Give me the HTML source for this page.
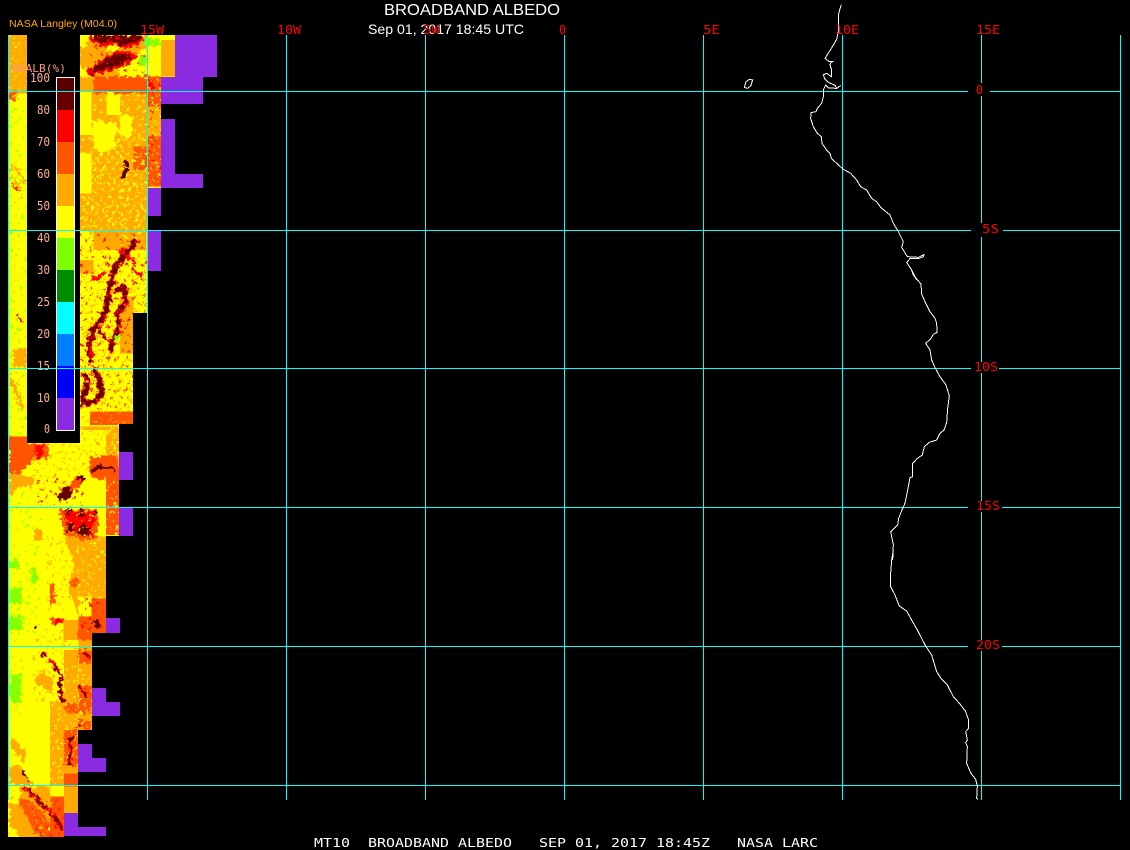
<!DOCTYPE html>
<html><head><meta charset="utf-8"><style>
html,body{margin:0;padding:0;background:#000;width:1130px;height:850px;overflow:hidden}
svg{display:block}
text{font-family:"DejaVu Sans Mono","Liberation Mono",monospace}
</style></head><body>
<svg width="1130" height="850" viewBox="0 0 1130 850" xmlns="http://www.w3.org/2000/svg">
<defs>
<clipPath id="cov"><polygon points="9,35 175,35 175,77 161,77 161,188 147,188 147,313 133,313 133,424 119,424 119,536 106,536 106,633 92,633 92,730 78,730 78,813 64,813 64,837 8,837 8,800 9,800"/></clipPath>
<filter id="rough" filterUnits="userSpaceOnUse" x="0" y="20" width="200" height="830" color-interpolation-filters="sRGB">
<feTurbulence type="fractalNoise" baseFrequency=".22" numOctaves="3" seed="7" result="n"/>
<feDisplacementMap in="SourceGraphic" in2="n" scale="9" xChannelSelector="R" yChannelSelector="G"/>
</filter>
<pattern id="sy" width="93" height="87" patternUnits="userSpaceOnUse"><path fill="#ff0" d="M4 5h6v6h-6zM22 14h5v5h-5zM40 3h6v5h-6zM61 11h5v6h-5zM80 6h6v6h-6zM12 28h6v6h-6zM33 25h5v5h-5zM52 32h6v6h-6zM72 27h5v5h-5zM88 38h5v6h-5zM7 47h5v5h-5zM26 44h6v6h-6zM43 52h5v5h-5zM64 48h6v6h-6zM81 55h6v6h-6zM15 66h6v5h-6zM35 63h5v6h-5zM55 70h6v5h-6zM74 68h5v5h-5zM3 78h6v6h-6zM46 80h5v5h-5zM85 76h6v6h-6z"/></pattern>
<pattern id="sy2" width="77" height="67" patternUnits="userSpaceOnUse" patternTransform="translate(11 17)"><path fill="#ff0" d="M2 2h9v6h-9zM30 6h6v9h-6zM52 3h9v6h-9zM15 22h6v6h-6zM42 26h9v6h-9zM66 20h6v9h-6zM6 42h9v6h-9zM28 46h6v6h-6zM58 44h6v9h-6zM18 58h9v5h-9zM44 60h6v6h-6z"/></pattern>
<pattern id="so" width="87" height="91" patternUnits="userSpaceOnUse"><path fill="#fa0" d="M9 3h6v6h-6zM30 9h5v5h-5zM50 2h6v6h-6zM70 12h6v5h-6zM3 22h5v6h-5zM20 27h6v6h-6zM41 24h6v5h-6zM60 31h5v5h-5zM78 28h6v6h-6zM12 44h5v5h-5zM33 42h6v6h-6zM53 50h6v5h-6zM72 46h5v6h-5zM5 62h6v6h-6zM25 66h5v5h-5zM45 63h6v6h-6zM65 70h6v6h-6zM82 64h5v5h-5zM14 80h6v6h-6zM36 84h5v5h-5zM57 82h5v5h-5z"/></pattern>
<pattern id="sl" width="71" height="79" patternUnits="userSpaceOnUse"><path fill="#8f0" d="M5 6h6v6h-6zM30 3h5v5h-5zM55 11h6v6h-6zM17 25h6v5h-6zM42 30h5v6h-5zM64 34h5v5h-5zM8 48h5v6h-5zM31 53h6v6h-6zM54 58h6v5h-6zM20 70h5v5h-5zM45 72h6v6h-6z"/></pattern>
<pattern id="sr" width="79" height="73" patternUnits="userSpaceOnUse"><path fill="#f00" d="M6 4h6v6h-6zM33 9h6v5h-6zM60 3h5v6h-5zM18 24h5v6h-5zM46 27h6v6h-6zM70 32h6v5h-6zM5 45h6v6h-6zM30 50h5v5h-5zM57 53h6v6h-6zM17 65h6v6h-6zM42 68h5v5h-5z"/></pattern>
<pattern id="sh" width="53" height="47" patternUnits="userSpaceOnUse"><path fill="#f00" d="M5 5h6v6h-6zM28 12h6v6h-6zM44 30h5v6h-5zM12 33h6v5h-6z"/><path fill="#fa0" d="M38 3h5v5h-5zM22 38h5v5h-5z"/></pattern>
</defs>
<rect width="1130" height="850" fill="#000"/>

<!-- MAP -->
<g clip-path="url(#cov)">
<!-- straight swath columns -->
<g shape-rendering="crispEdges">
<rect x="8" y="35" width="170" height="803" fill="#ff0"/>
<g transform="translate(0 20) scale(.33333)">
<rect x="27" y="45" width="54" height="175" fill="#fa0"/>
<rect x="240" y="170" width="205" height="465" fill="#fa0"/>
<rect x="320" y="170" width="123" height="45" fill="#f50"/>
<rect x="240" y="215" width="35" height="130" fill="#ff0"/>
<rect x="240" y="400" width="35" height="120" fill="#ff0"/>
<rect x="320" y="215" width="40" height="70" fill="#ff0"/>
<rect x="443" y="45" width="40" height="125" fill="#ff0"/>
<rect x="483" y="60" width="42" height="110" fill="#fa0"/>
<rect x="443" y="170" width="40" height="90" fill="#f50"/>
<rect x="443" y="260" width="40" height="90" fill="#fa0"/>
<rect x="443" y="350" width="40" height="150" fill="#f50"/>
<rect x="400" y="380" width="43" height="70" fill="#f50"/>
</g>
<g transform="translate(0 230) scale(.33333)">
<rect x="240" y="0" width="200" height="660" fill="#ff0"/>
<rect x="280" y="0" width="160" height="60" fill="#fa0"/>
<rect x="240" y="90" width="40" height="40" fill="#fa0"/>
<rect x="360" y="200" width="40" height="170" fill="#fa0"/>
<rect x="270" y="545" width="130" height="40" fill="#f50"/>
<rect x="240" y="590" width="120" height="70" fill="#fa0"/>
<rect x="27" y="620" width="55" height="40" fill="#f50"/>
</g>
<g transform="translate(0 430) scale(.33333)">
<rect x="235" y="0" width="85" height="120" fill="#ff0"/>
<rect x="318" y="0" width="42" height="120" fill="#fa0"/>
<rect x="318" y="120" width="42" height="195" fill="#f50"/>
<rect x="235" y="320" width="85" height="190" fill="#fa0"/>
<rect x="275" y="505" width="45" height="105" fill="#f50"/>
<rect x="235" y="500" width="40" height="60" fill="#ff0"/>
<rect x="235" y="560" width="40" height="70" fill="#f50"/>
<rect x="190" y="570" width="45" height="60" fill="#fa0"/>
</g>
<g transform="translate(0 630) scale(.33333)">
<rect x="235" y="0" width="42" height="300" fill="#fa0"/>
<rect x="150" y="215" width="42" height="250" fill="#fa0"/>
<rect x="192" y="60" width="42" height="405" fill="#fa0"/>
<rect x="192" y="430" width="42" height="40" fill="#f50"/>
<rect x="192" y="470" width="42" height="155" fill="#fa0"/>
<rect x="150" y="500" width="42" height="125" fill="#f50"/>
</g>
</g>

<!-- organic features, roughened -->
<g filter="url(#rough)">
<!-- top cluster, crop coords x=80+zx/3 y=35+zy/3 -->
<g transform="translate(80 35) scale(.33333)">
<polygon points="0,0 205,0 205,125 0,125" fill="#fa0"/>
<polygon points="0,0 40,0 20,30 0,42" fill="#ff0"/>
<polygon points="0,95 30,100 40,125 0,125" fill="#ff0"/>
<polygon points="105,105 160,62 205,35 205,125 130,125" fill="#ff0"/>
<polygon points="80,30 120,28 110,50 85,50" fill="#ff0"/>
<polygon points="180,22 195,10 240,15 245,30 200,36" fill="#8f0"/>
<polygon points="178,62 200,60 200,95 175,92" fill="#8f0"/>
<polygon points="40,125 205,125 205,175 40,175" fill="#f50"/>
<polygon points="28,0 195,0 180,26 135,40 100,30 60,32 38,22" fill="#f00"/>
<polygon points="18,108 80,66 110,45 156,50 168,72 125,96 62,114 32,122" fill="#f00"/>
<polygon points="34,0 188,0 172,18 130,32 100,22 60,26 40,14" fill="#600"/>
<polygon points="28,105 80,72 110,54 150,58 158,70 120,88 60,106 36,114" fill="#600"/>
<rect x="25" y="0" width="170" height="125" fill="url(#sh)"/>
<rect x="205" y="125" width="38" height="60" fill="#f50"/>
<rect x="205" y="130" width="15" height="30" fill="#f00"/>
</g>

<g transform="translate(0 20) scale(.33333)">
<rect x="27" y="45" width="54" height="165" fill="url(#sy)"/>
<polygon points="27,215 52,215 52,245 27,245" fill="#f50"/>
<rect x="27" y="215" width="54" height="35" fill="url(#sy2)"/>
<rect x="27" y="260" width="54" height="370" fill="url(#sl)"/>
<path d="M30 430Q60 450 75 490M30 470Q50 480 60 510" fill="none" stroke="#fa0" stroke-width="7"/>
<path d="M38 490L62 520" fill="none" stroke="#f00" stroke-width="5"/>
<rect x="27" y="440" width="54" height="100" fill="url(#so)"/>
<polygon points="276,300 350,310 345,385 300,400 276,370" fill="#ff0"/>
<polygon points="360,280 400,290 395,350 360,350" fill="#ff0"/>
<rect x="240" y="215" width="203" height="420" fill="url(#sy)"/>
<rect x="240" y="330" width="203" height="300" fill="url(#sy2)"/>
<rect x="443" y="170" width="40" height="330" fill="url(#sr)"/>
<rect x="443" y="170" width="40" height="330" fill="url(#sy)"/>
<polygon points="360,475 375,445 390,440 380,465 365,478" fill="#600"/>
<polygon points="368,435 380,420 390,425 378,440" fill="#600"/>
</g>

<g transform="translate(0 230) scale(.33333)">
<rect x="27" y="0" width="54" height="620" fill="url(#sl)"/>
<rect x="40" y="355" width="40" height="55" fill="#fa0"/>
<path d="M52 255L70 277" stroke="#f00" stroke-width="6" fill="none"/>
<path d="M30 440L70 540" stroke="#fa0" stroke-width="10" fill="none"/>
<rect x="27" y="410" width="54" height="120" fill="url(#so)"/>
<rect x="240" y="0" width="200" height="600" fill="url(#so)"/>
<rect x="240" y="590" width="120" height="70" fill="url(#sy)"/>
<rect x="360" y="0" width="80" height="60" fill="url(#sy2)"/>
<!-- red halo chain -->
<g fill="none" stroke="#f00" stroke-linejoin="round" stroke-linecap="round">
<path stroke-width="20" d="M405 35L372 78L345 115L330 165L322 222L310 262L282 296L270 342L272 385"/>
<path stroke-width="18" d="M352 180L372 172L378 212L352 252L358 300L336 332L332 362"/>
<path stroke-width="20" d="M285 420L300 460L306 492L270 522L248 516L258 470"/>
<path stroke-width="10" d="M298 300L322 332M262 350L275 400M250 430L270 460M282 145L315 130M395 120L425 140M365 60L405 100"/>
</g>
<g fill="none" stroke="#600" stroke-linejoin="round" stroke-linecap="round">
<path stroke-width="13" d="M405 35L372 78L345 115L330 165L322 222L310 262L282 296L270 342"/>
<path stroke-width="11" d="M352 180L372 172L378 212L352 252L358 300L336 332L332 362"/>
<path stroke-width="14" d="M285 420L300 460L306 492L270 522L248 516L258 470"/>
<path stroke-width="6" d="M298 300L322 332M262 350L270 395M255 430L270 458"/>
</g>
<rect x="240" y="10" width="200" height="530" fill="url(#sh)"/>
<polygon points="340,320 360,315 360,325 340,330" fill="#8f0"/>
</g>

<g transform="translate(0 430) scale(.33333)">
<polygon points="27,20 100,40 145,40 145,85 100,90 60,130 27,130" fill="#f50"/>
<rect x="105" y="45" width="22" height="38" fill="#f00"/>
<polygon points="27,130 100,140 95,170 60,172 27,200" fill="#fa0"/>
<polygon points="100,60 235,60 235,130 150,120" fill="#fa0" opacity="0"/>
<rect x="100" y="40" width="135" height="130" fill="url(#so)"/>
<rect x="235" y="0" width="85" height="120" fill="url(#so)"/>
<rect x="318" y="0" width="42" height="120" fill="url(#sy)"/>
<rect x="318" y="120" width="42" height="195" fill="url(#sy)"/>
<polygon points="265,85 345,75 358,105 350,140 300,150 270,140" fill="#f50"/>
<path d="M275 125L295 110L345 118" stroke="#600" stroke-width="11" fill="none"/>
<path d="M240 140L225 165L190 190" stroke="#f50" stroke-width="26" fill="none"/>
<rect x="110" y="150" width="140" height="75" fill="url(#sr)"/>
<polygon points="172,198 193,170 220,185 203,207 178,208" fill="#600"/>
<rect x="235" y="135" width="14" height="18" fill="#600"/>
<polygon points="175,240 295,238 290,325 240,335 195,315" fill="#f50"/>
<polygon points="190,245 285,243 280,318 215,312" fill="#f00"/>
<polygon points="232,294 250,280 272,300 265,318 235,316" fill="#600"/>
<polygon points="195,290 215,280 228,298 205,308" fill="#600"/>
<rect x="198" y="235" width="14" height="18" fill="#600"/>
<rect x="238" y="235" width="12" height="24" fill="#600"/>
<rect x="285" y="235" width="8" height="20" fill="#600"/>
<rect x="190" y="240" width="170" height="80" fill="url(#sy)"/>
<polygon points="190,320 235,320 235,560 205,470 225,400" fill="#fa0"/>
<polygon points="205,460 235,440 235,470 215,470" fill="#f50"/>
<rect x="235" y="320" width="85" height="190" fill="url(#sy)"/>
<rect x="235" y="500" width="85" height="130" fill="url(#sr)"/>
<rect x="280" y="570" width="18" height="25" fill="#600"/>
<rect x="140" y="320" width="95" height="220" fill="url(#so)"/>
<polygon points="150,455 165,460 165,520 150,525" fill="#f50"/>
<polygon points="100,300 130,295 130,330 100,330" fill="#fa0"/>
<rect x="27" y="392" width="30" height="24" fill="#8f0"/>
<rect x="27" y="472" width="36" height="48" fill="#8f0"/>
<rect x="27" y="556" width="40" height="44" fill="#8f0"/>
<rect x="94" y="412" width="16" height="48" fill="#8f0"/>
<rect x="27" y="170" width="90" height="130" fill="url(#sl)"/>
<rect x="27" y="340" width="90" height="290" fill="url(#sl)"/>
<rect x="150" y="565" width="40" height="15" fill="#f50"/>
<rect x="170" y="565" width="12" height="14" fill="#f00"/>
<rect x="100" y="585" width="8" height="10" fill="#600"/>
</g>

<g transform="translate(0 630) scale(.33333)">
<rect x="235" y="0" width="42" height="30" fill="#f50"/>
<rect x="235" y="60" width="40" height="40" fill="#f50"/>
<rect x="235" y="165" width="40" height="85" fill="#f50"/>
<rect x="235" y="270" width="40" height="30" fill="#f50"/>
<rect x="195" y="220" width="38" height="30" fill="#f50"/>
<rect x="192" y="300" width="42" height="110" fill="#f50"/>
<rect x="192" y="100" width="85" height="300" fill="url(#sy)"/>
<rect x="150" y="215" width="42" height="250" fill="url(#sy)"/>
<rect x="100" y="0" width="135" height="215" fill="url(#so)"/>
<polygon points="100,155 125,120 150,140 160,190 130,170" fill="#fa0"/>
<path d="M125 70L140 75M150 85L185 140L178 170L188 215M240 170L260 200M250 60L270 90M212 320L210 410M240 280L236 295" fill="none" stroke="#f00" stroke-width="11"/>
<path d="M125 70L140 75M165 110L185 140L178 170L188 215M240 170L260 200M250 65L268 85M212 320L210 410M240 280L236 295" fill="none" stroke="#600" stroke-width="6"/>
<rect x="30" y="130" width="35" height="90" fill="#8f0"/>
<rect x="27" y="10" width="40" height="40" fill="url(#sl)"/>
<rect x="27" y="80" width="45" height="190" fill="url(#sl)"/>
<rect x="40" y="420" width="22" height="22" fill="#8f0"/>
<polygon points="30,320 60,345 80,380 70,400 35,350" fill="#fa0"/>
<polygon points="27,410 60,410 100,465 27,465" fill="#fa0"/>
<path d="M68 425L85 450" stroke="#600" stroke-width="8"/>
<polygon points="60,470 150,470 150,625 100,625 60,545" fill="#fa0"/>
<polygon points="60,500 110,530 150,580 150,625 100,625 60,560" fill="#f50"/>
<path d="M70 470L115 510L160 555L190 600" stroke="#f00" stroke-width="12" fill="none"/>
<path d="M85 478L115 510L160 555L190 600" stroke="#600" stroke-width="5" fill="none"/>
<polygon points="27,520 60,520 100,600 120,625 70,625 30,590" fill="#fa0"/>
<rect x="27" y="465" width="125" height="160" fill="url(#so)"/>
<rect x="100" y="500" width="90" height="120" fill="url(#sr)"/>
</g>
</g>
</g>

<!-- purple swaths -->
<g fill="#8a2be2" shape-rendering="crispEdges">
<rect x="175" y="35" width="42" height="42"/>
<rect x="161" y="77" width="42" height="27"/>
<rect x="161" y="119" width="14" height="55"/>
<rect x="161" y="174" width="42" height="14"/>
<rect x="147" y="188" width="14" height="28"/>
<rect x="147" y="231" width="14" height="40"/>
<rect x="119" y="452" width="14" height="28"/>
<rect x="119" y="508" width="14" height="28"/>
<rect x="106" y="618" width="14" height="15"/>
<rect x="92" y="688" width="14" height="14"/>
<rect x="92" y="702" width="28" height="14"/>
<rect x="78" y="744" width="14" height="14"/>
<rect x="78" y="758" width="28" height="14"/>
<rect x="64" y="813" width="14" height="14"/>
<rect x="64" y="827" width="42" height="9"/>
</g>

<!-- legend -->
<g shape-rendering="crispEdges">
<rect x="27" y="35" width="53" height="408" fill="#000"/>
<rect x="57" y="78" width="17" height="12" fill="#5a0000"/>
<rect x="57" y="90" width="17" height="20" fill="#660000"/>
<rect x="57" y="110" width="17" height="32" fill="#f00"/>
<rect x="57" y="142" width="17" height="32" fill="#f50"/>
<rect x="57" y="174" width="17" height="32" fill="#fa0"/>
<rect x="57" y="206" width="17" height="32" fill="#ff0"/>
<rect x="57" y="238" width="17" height="32" fill="#80ff00"/>
<rect x="57" y="270" width="17" height="32" fill="#008c00"/>
<rect x="57" y="302" width="17" height="32" fill="#0ff"/>
<rect x="57" y="334" width="17" height="32" fill="#0080ff"/>
<rect x="57" y="366" width="17" height="32" fill="#00f"/>
<rect x="57" y="398" width="17" height="32" fill="#8a2be2"/>
<rect x="56.5" y="77.5" width="18" height="353" fill="none" stroke="#fff"/>
</g>
<g fill="#ffb090" font-size="12">
<text x="12" y="72" font-size="11" textLength="54" lengthAdjust="spacingAndGlyphs" fill="#ff9977">BBALB(%)</text>
<text x="30" y="82" textLength="20" lengthAdjust="spacingAndGlyphs">100</text>
<text x="37" y="114" textLength="13" lengthAdjust="spacingAndGlyphs">80</text>
<text x="37" y="146" textLength="13" lengthAdjust="spacingAndGlyphs">70</text>
<text x="37" y="178" textLength="13" lengthAdjust="spacingAndGlyphs">60</text>
<text x="37" y="210" textLength="13" lengthAdjust="spacingAndGlyphs">50</text>
<text x="37" y="242" textLength="13" lengthAdjust="spacingAndGlyphs">40</text>
<text x="37" y="274" textLength="13" lengthAdjust="spacingAndGlyphs">30</text>
<text x="37" y="306" textLength="13" lengthAdjust="spacingAndGlyphs">25</text>
<text x="37" y="338" textLength="13" lengthAdjust="spacingAndGlyphs">20</text>
<text x="37" y="370" textLength="13" lengthAdjust="spacingAndGlyphs">15</text>
<text x="37" y="402" textLength="13" lengthAdjust="spacingAndGlyphs">10</text>
<text x="44" y="433" textLength="6" lengthAdjust="spacingAndGlyphs">0</text>
</g>

<!-- grid -->
<g stroke="#0ff" stroke-width="1" shape-rendering="crispEdges" fill="none">
<path d="M8.5 35V800M147.5 35V800M286.5 35V800M425.5 35V800M564.5 35V800M703.5 35V800M842.5 35V800M981.5 35V83M981.5 96V223M981.5 237V362M981.5 373V501M981.5 512V640M981.5 651V800M1120.5 35V800"/>
<path d="M8 91.5H968M990 91.5H1120M8 230.5H971M1003 230.5H1120M8 368.5H971M999 368.5H1120M8 507.5H968M1002 507.5H1120M8 646.5H968M1002 646.5H1120M8 785.5H1120"/>
</g>

<!-- coast -->
<g fill="none" stroke="#fff" stroke-width="3" stroke-linejoin="miter" shape-rendering="crispEdges">
<g transform="translate(730 0) scale(.33333)">
<polyline points="334,14 329,30 325,45 325,70 325,95 322,108 320,118 310,135 298,155 285,175 298,185 310,184 303,187 300,195 305,210 304,230 290,220 280,225 285,238 297,248 315,256 320,265 295,264 287,255 280,270 280,290 275,310 262,325 258,335 243,338 242,355 250,380 262,400 274,410 276,430 290,450 300,460 304,475 320,490 340,508 362,520 380,540 392,560 410,570 425,595 440,605 452,622 480,645 490,670 505,695 520,725 515,742 532,770 565,772 582,764 580,770 565,776 540,776 530,787 545,810 560,840"/>
<polyline points="320,265 332,256"/>
<polygon points="43,262 48,245 58,238 68,240 62,258 52,265"/>
</g>
<g transform="translate(860 270) scale(.33333)">
<polyline points="155,0 160,15 183,42 185,72 195,95 210,125 225,145 230,160 231,187 220,193 212,207 197,220 210,240 215,270 226,295 240,320 258,345 268,378 263,415 260,458 252,480 240,490 230,510 208,517 193,530 187,555 172,565 158,580 158,620 150,623 144,655 135,700 128,715 116,745 113,765 92,785 100,825 98,870"/>
</g>
<g transform="translate(860 550) scale(.33333)">
<polyline points="100,0 95,30 92,70 92,110 105,135 118,168 140,183 155,210 172,240 185,265 198,290 215,315 230,365 243,385 262,405 280,440 300,462 316,483 326,510 326,535 317,545 322,570 317,578 322,590 320,640 333,670 347,688 352,708 350,745 354,748"/>
</g>
</g>

<!-- titles -->
<g fill="#fff">
<text x="384" y="15" font-size="16" textLength="176" lengthAdjust="spacingAndGlyphs" style="font-family:'Liberation Sans',sans-serif">BROADBAND ALBEDO</text>
<text x="368" y="34" font-size="14" textLength="156" lengthAdjust="spacingAndGlyphs" style="font-family:'Liberation Sans',sans-serif">Sep 01, 2017 18:45 UTC</text>
</g>
<text x="9" y="27" font-size="10" textLength="108" lengthAdjust="spacingAndGlyphs" fill="#ffaa00" style="font-family:'Liberation Sans',sans-serif">NASA Langley (M04.0)</text>

<!-- coordinate labels -->
<g fill="#f00" font-size="12">
<text x="140" y="34" textLength="24" lengthAdjust="spacingAndGlyphs">15W</text>
<text x="277" y="34" textLength="24" lengthAdjust="spacingAndGlyphs">10W</text>
<text x="423" y="34" textLength="17" lengthAdjust="spacingAndGlyphs">5W</text>
<text x="559" y="34" textLength="7" lengthAdjust="spacingAndGlyphs">0</text>
<text x="703" y="34" textLength="17" lengthAdjust="spacingAndGlyphs">5E</text>
<text x="835" y="34" textLength="24" lengthAdjust="spacingAndGlyphs">10E</text>
<text x="976" y="34" textLength="24" lengthAdjust="spacingAndGlyphs">15E</text>
<text x="976" y="94" textLength="7" lengthAdjust="spacingAndGlyphs">0</text>
<text x="982" y="233" textLength="17" lengthAdjust="spacingAndGlyphs">5S</text>
<text x="974" y="371" textLength="24" lengthAdjust="spacingAndGlyphs">10S</text>
<text x="976" y="510" textLength="24" lengthAdjust="spacingAndGlyphs">15S</text>
<text x="976" y="649" textLength="24" lengthAdjust="spacingAndGlyphs">20S</text>
</g>

<!-- bottom line -->
<text x="314" y="847" font-size="12" textLength="504" lengthAdjust="spacingAndGlyphs" fill="#fff" xml:space="preserve">MT10  BROADBAND ALBEDO   SEP 01, 2017 18:45Z   NASA LARC</text>
</svg>
</body></html>
